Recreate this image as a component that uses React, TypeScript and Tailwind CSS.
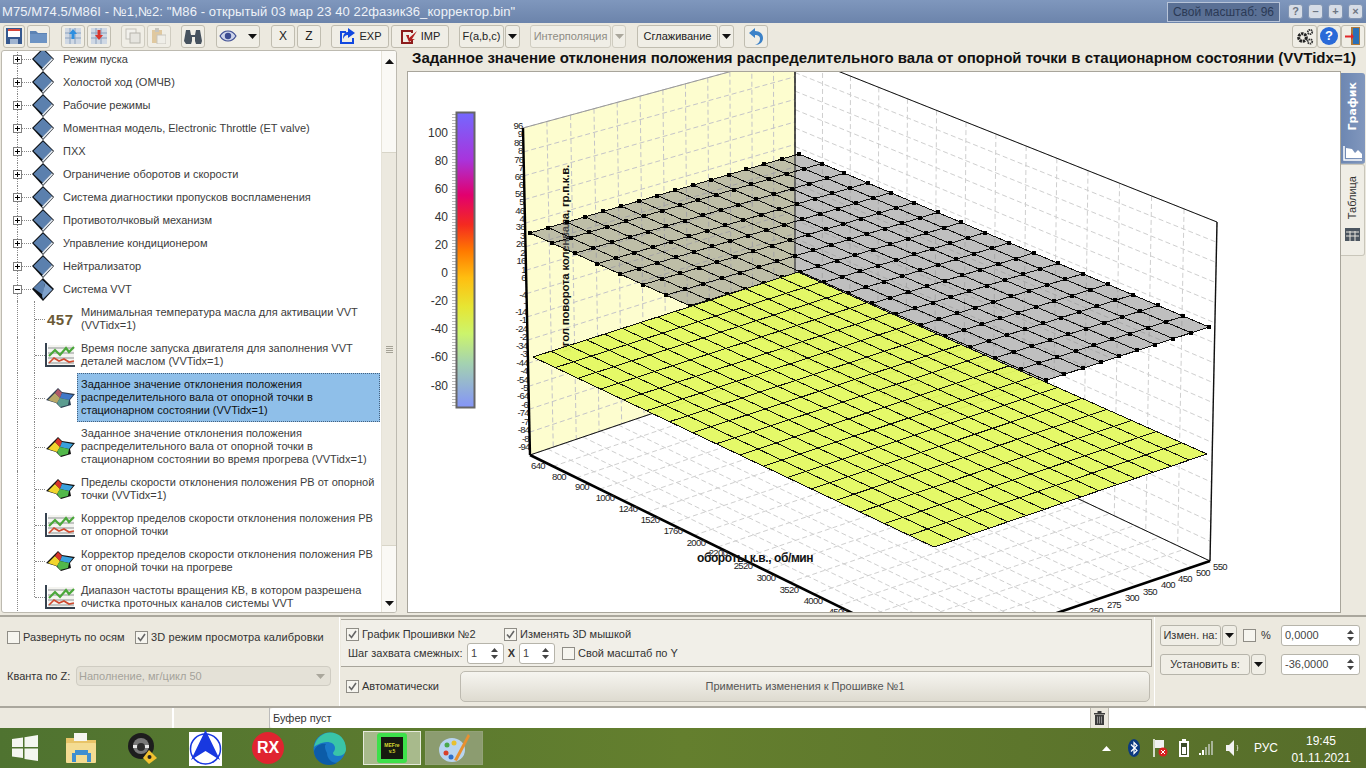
import React from "react";

type Pt = [number, number];

// maps the unit square on a screen quad, so the 3D planes keep their perspective
function quadMap(q: Pt[]) {
  const [[x0, y0], [x1, y1], [x2, y2], [x3, y3]] = q;
  const dx1 = x1 - x2, dx2 = x3 - x2, sx = x0 - x1 + x2 - x3;
  const dy1 = y1 - y2, dy2 = y3 - y2, sy = y0 - y1 + y2 - y3;
  const den = dx1 * dy2 - dx2 * dy1;
  const g = (sx * dy2 - dx2 * sy) / den;
  const h = (dx1 * sy - sx * dy1) / den;
  const a = x1 - x0 + g * x1, b = x3 - x0 + h * x3;
  const d = y1 - y0 + g * y1, e = y3 - y0 + h * y3;
  return (u: number, v: number): Pt => {
    const w = g * u + h * v + 1;
    return [(a * u + b * v + x0) / w, (d * u + e * v + y0) / w];
  };
}

function Grid({ quad, nu, nv, ...rest }: { quad: Pt[]; nu: number; nv: number } & React.SVGProps<SVGPathElement>) {
  const m = quadMap(quad);
  let path = "";
  for (let i = 0; i <= nu; i++) {
    const p = m(i / nu, 0), r = m(i / nu, 1);
    path += `M${p[0]} ${p[1]}L${r[0]} ${r[1]}`;
  }
  for (let i = 0; i <= nv; i++) {
    const p = m(0, i / nv), r = m(1, i / nv);
    path += `M${p[0]} ${p[1]}L${r[0]} ${r[1]}`;
  }
  return <path d={path} fill="none" {...rest} />;
}

const pts = (q: Pt[]) => q.map((p) => p.join(",")).join(" ");

const grayQ: Pt[] = [[530, 233], [799, 154], [1209, 327], [934, 417]];
const yellowQ: Pt[] = [[533, 357], [798, 272], [1207, 454], [934, 547]];
const leftWall: Pt[] = [[523, 128], [795, 54], [795, 365], [530, 455]];
const backWall: Pt[] = [[795, 54], [1217, 222], [1210, 561], [795, 365]];
const floor: Pt[] = [[530, 455], [795, 365], [1210, 561], [936, 654]];

const xLabels: [string, number, number][] = [
  ["640", 538, 469], ["800", 559, 480], ["900", 582, 490], ["1000", 605, 501], ["1240", 628, 512],
  ["1520", 650, 523], ["1760", 673, 534], ["2000", 696, 546], ["2200", 718, 556], ["2520", 743, 569],
  ["3000", 766, 581], ["3520", 789, 593], ["4000", 813, 604], ["4500", 838, 615],
];
const rLabels: [string, number, number][] = [
  ["550", 1220, 570], ["500", 1203, 576], ["450", 1185, 582], ["400", 1168, 588],
  ["350", 1150, 595], ["300", 1132, 601], ["275", 1114, 608], ["250", 1096, 614],
];
const scale: [string, number][] = [
  ["100", 137], ["80", 165], ["60", 193], ["40", 221], ["20", 249],
  ["0", 277], ["-20", 305], ["-40", 333], ["-60", 361], ["-80", 390],
];

function Chart() {
  const m = quadMap(grayQ);
  const dots: Pt[] = [];
  for (let i = 0; i <= 15; i++) for (let j = 0; j <= 17; j++) dots.push(m(i / 15, j / 17));
  const zLabels: string[] = [];
  for (let v = 96; v >= -96; v -= 5) zLabels.push(String(v));
  return (
    <svg viewBox="408 72 932 540" className="block h-[540px] w-[932px] bg-white" style={{ fontFamily: '"Liberation Sans", sans-serif' }}>
      <defs>
        <linearGradient id="bar" x1="0" y1="0" x2="0" y2="1">
          <stop offset="0" stopColor="#7468ff" />
          <stop offset="0.16" stopColor="#a834dc" />
          <stop offset="0.28" stopColor="#e2006e" />
          <stop offset="0.38" stopColor="#f42a20" />
          <stop offset="0.47" stopColor="#ff7a00" />
          <stop offset="0.56" stopColor="#ffbe10" />
          <stop offset="0.66" stopColor="#e6e634" />
          <stop offset="0.75" stopColor="#ccf46c" />
          <stop offset="0.85" stopColor="#a4d2b0" />
          <stop offset="1" stopColor="#8494f8" />
        </linearGradient>
      </defs>

      {zLabels.map((t, i) => (
        <text key={t} x={522.5 + (i * 7) / 38 + (i % 2 ? 4 : 0)} y={129 + i * 8.45} textAnchor="end" fontSize="9.5" letterSpacing="-0.8" fill="#222">{t}</text>
      ))}
      <polygon points={pts(leftWall)} fill="#fdfdcf" />
      <Grid quad={leftWall} nu={12} nv={14} stroke="#c4c4c8" strokeDasharray="5 3" />
      <Grid quad={backWall} nu={14} nv={17} stroke="#cfcfcf" strokeDasharray="5 3" />
      <Grid quad={floor} nu={15} nv={17} stroke="#cfcfcf" strokeDasharray="5 3" />

      <line x1="523" y1="128" x2="795" y2="54" stroke="#999" />
      <line x1="795" y1="54" x2="1217" y2="222" stroke="#111" />
      <line x1="795" y1="54" x2="795" y2="365" stroke="#111" strokeWidth="1.4" />
      <line x1="1217" y1="222" x2="1210" y2="561" stroke="#111" strokeWidth="1.4" />
      <line x1="530" y1="455" x2="795" y2="365" stroke="#111" />
      <line x1="795" y1="365" x2="1210" y2="561" stroke="#111" />
      <line x1="523" y1="128" x2="530" y2="455" stroke="#000" strokeWidth="2.4" />
      <line x1="530" y1="455" x2="936" y2="654" stroke="#000" strokeWidth="2.6" />
      <line x1="1210" y1="561" x2="936" y2="654" stroke="#000" strokeWidth="2.6" />

      {xLabels.map(([t, x, y]) => (
        <text key={t} x={x} y={y} textAnchor="middle" fontSize="9.5" letterSpacing="-0.6" fill="#222">{t}</text>
      ))}
      {rLabels.map(([t, x, y]) => (
        <text key={t} x={x} y={y} textAnchor="middle" fontSize="9.5" letterSpacing="-0.6" fill="#222">{t}</text>
      ))}

      <text transform="translate(569 165) rotate(-90)" textAnchor="end" fontSize="11.5" letterSpacing="-0.25" fontWeight="700" fill="#111">
        угол поворота коленвала, гр.п.к.в.
      </text>

      <polygon points={pts(grayQ)} fill="#808080" fillOpacity="0.5" />
      <Grid quad={grayQ} nu={15} nv={17} stroke="#111" shapeRendering="crispEdges" />
      {dots.map(([x, y], i) => (
        <rect key={i} x={Math.round(x) - 2} y={Math.round(y) - 2} width="4" height="4" fill="#000" />
      ))}

      <polygon points={pts(yellowQ)} fill="#e4f963" fillOpacity="0.96" />
      <Grid quad={yellowQ} nu={15} nv={17} stroke="#111" shapeRendering="crispEdges" />

      <text x="697" y="562" fontSize="12" letterSpacing="-0.4" fontWeight="700" fill="#111">обороты к.в., об/мин</text>

      {Array.from({ length: 98 }, (_, i) => (
        <rect key={i} x="452" y={114 + i * 3} width="4" height="1" fill="#bbb" />
      ))}
      <rect x="456.5" y="112.5" width="18" height="295" fill="url(#bar)" stroke="#666" strokeWidth="2" />
      {scale.map(([t, y]) => (
        <text key={t} x="448" y={y} textAnchor="end" fontSize="12" fill="#333">{t}</text>
      ))}
    </svg>
  );
}

function ToolBtn({ w, ml = 0, off, children }: { w: string; ml?: string | number; off?: boolean; children?: React.ReactNode }) {
  return (
    <div
      style={{ marginLeft: ml as number, width: w }}
      className={`flex h-[23px] shrink-0 items-center justify-center rounded-[3px] border bg-[#f0eee6] text-[11px] ${off ? "border-[#cfccc0] text-[#8e8c84]" : "border-[#c0bdb0] text-[#222]"}`}
    >
      {children}
    </div>
  );
}

function Tri({ off, up }: { off?: boolean; up?: boolean }) {
  return (
    <svg width="9" height="5" viewBox="0 0 9 5" className={up ? "rotate-180" : ""}>
      <path d="M0 0h9L4.5 5z" fill={off ? "#aaa79c" : "#111"} />
    </svg>
  );
}

function Check({ on }: { on?: boolean }) {
  return (
    <span className="flex h-[13px] w-[13px] shrink-0 items-center justify-center border border-[#8f8d86] bg-[#f6f5ef]">
      {on && (
        <svg width="9" height="9" viewBox="0 0 9 9">
          <path d="M1 4.5l2.5 3L8 1" fill="none" stroke="#666" strokeWidth="1.6" />
        </svg>
      )}
    </span>
  );
}

function Spin({ w, value }: { w: string; value: string }) {
  return (
    <div style={{ width: w }} className="flex h-[21px] shrink-0 items-center justify-between rounded-[3px] border border-[#b6b4aa] bg-white pl-[3px] pr-[5px] text-[11px] text-[#444]">
      <span>{value}</span>
      <span className="flex flex-col gap-[3px]">
        <svg width="7" height="4" viewBox="0 0 7 4"><path d="M0 4h7L3.5 0z" fill="#444" /></svg>
        <svg width="7" height="4" viewBox="0 0 7 4"><path d="M0 0h7L3.5 4z" fill="#444" /></svg>
      </span>
    </div>
  );
}

function Book({ open }: { open?: boolean }) {
  return (
    <svg width="24" height="26" viewBox="0 0 24 26" className="-my-[2px] shrink-0">
      <path d="M1 12L12 1l11 11-11 12z" fill="#0b0f14" />
      <path d={open ? "M2.5 11L11 3l3 3-2 12z" : "M2.5 12L12 2.5l9 8.5-9 10z"} fill="#5b80ae" />
      {open ? <path d="M11 3l10.5 9.5L12 22l-1-3 3-12z" fill="#7fa2cc" /> : <path d="M21 11l1 1.5L12 23l-1-1.5z" fill="#dfe7f0" />}
    </svg>
  );
}

function LineIcon() {
  return (
    <svg width="30" height="26" viewBox="0 0 30 26">
      <rect x="3" y="3" width="26" height="20" fill="#f4f4f0" />
      <path d="M1 1v23h29" fill="none" stroke="#36424f" strokeWidth="2" />
      <path d="M3 6h26M3 11h26M3 16h26M3 21h26" stroke="#8f9494" strokeWidth="1" />
      <path d="M4 14l6-6 5 5 6-7 3 4 5-5" fill="none" stroke="#4aa83a" strokeWidth="2.2" />
      <path d="M4 21l5-5 5 3 5-2 5 3 5-1" fill="none" stroke="#cf4a30" strokeWidth="1.7" />
    </svg>
  );
}

function SurfaceIcon({ dim }: { dim?: boolean }) {
  return (
    <svg width="30" height="24" viewBox="0 0 30 24">
      <path d="M1 14L13 2l4 4 13 2-5 6 1 5-10 3-5-5z" fill={dim ? "#2c3c50" : "#101010"} />
      <path d="M3 14l7-7 5 5-3 5z" fill={dim ? "#b8a868" : "#f2d52e"} />
      <path d="M10 7l3-4 4 4-2 5z" fill={dim ? "#b05868" : "#d8342a"} />
      <path d="M15 12l2-5 11 2-4 5z" fill={dim ? "#3f78c8" : "#3aa0dc"} />
      <path d="M12 17l3-5 9 2-1 5-8 2z" fill={dim ? "#5c9c90" : "#52b84a"} />
    </svg>
  );
}

const topRows = [
  "Режим пуска", "Холостой ход (ОМЧВ)", "Рабочие режимы", "Моментная модель, Electronic Throttle (ET valve)", "ПХХ",
  "Ограничение оборотов и скорости", "Система диагностики пропусков воспламенения", "Противотолчковый механизм",
  "Управление кондиционером", "Нейтрализатор", "Система VVT",
];

type Child = { h: string; icon: "num" | "line" | "surf" | "surfDim"; lines: string[]; sel?: boolean; last?: boolean };
const children: Child[] = [
  { h: "36px", icon: "num", lines: ["Минимальная температура масла для активации VVT", "(VVTidx=1)"] },
  { h: "36px", icon: "line", lines: ["Время после запуска двигателя для заполнения VVT", "деталей маслом (VVTidx=1)"] },
  { h: "49px", icon: "surfDim", sel: true, lines: ["Заданное значение отклонения положения", "распределительного вала от опорной точки в", "стационарном состоянии (VVTidx=1)"] },
  { h: "49px", icon: "surf", lines: ["Заданное значение отклонения положения", "распределительного вала от опорной точки в", "стационарном состоянии во время прогрева (VVTidx=1)"] },
  { h: "36px", icon: "surf", lines: ["Пределы скорости отклонения положения РВ от опорной", "точки (VVTidx=1)"] },
  { h: "36px", icon: "line", lines: ["Корректор пределов скорости отклонения положения РВ", "от опорной точки"] },
  { h: "36px", icon: "surf", lines: ["Корректор пределов скорости отклонения положения РВ", "от опорной точки на прогреве"] },
  { h: "36px", icon: "line", last: true, lines: ["Диапазон частоты вращения КВ, в котором разрешена", "очистка проточных каналов системы VVT"] },
];

function Tree() {
  return (
    <div className="-mt-[3px] w-[379px] shrink-0 text-[11px] leading-[13px] text-[#3c3c3c]">
      {topRows.map((t, i) => (
        <div key={t} className="relative flex h-[23px] items-center pl-[11px]">
          <span className="absolute bottom-0 left-[15px] top-0 border-l border-dotted border-[#888]" />
          <span className="relative flex h-[9px] w-[9px] shrink-0 items-center justify-center border border-[#808080] bg-white">
            <span className="h-px w-[5px] bg-black" />
            {i < 10 && <span className="absolute h-[5px] w-px bg-black" />}
          </span>
          <span className="h-0 w-[9px] border-t border-dotted border-[#888]" />
          <Book open={i === 10} />
          <span className="ml-2 whitespace-nowrap">{t}</span>
        </div>
      ))}
      {children.map((c) => (
        <div key={c.lines[0] + c.icon} style={{ height: c.h }} className="relative flex items-center pl-[43px]">
          <span className="absolute bottom-0 left-[15px] top-0 border-l border-dotted border-[#888]" />
          <span className={`absolute left-[32px] top-0 border-l border-dotted border-[#888] ${c.last ? "h-1/2" : "h-full"}`} />
          <span className="absolute left-[33px] top-1/2 w-[10px] border-t border-dotted border-[#888]" />
          <span className="flex w-[32px] shrink-0 items-center">
            {c.icon === "num" && <span className="pl-[2px] text-[15px] font-bold tracking-[0.5px] text-[#6b5a36]">457</span>}
            {c.icon === "line" && <LineIcon />}
            {c.icon === "surf" && <SurfaceIcon />}
            {c.icon === "surfDim" && <SurfaceIcon dim />}
          </span>
          <div className={`flex h-full w-[303px] flex-col justify-center whitespace-nowrap ${c.sel ? "border border-dotted border-[#44617f] bg-[#8fbfe9] pl-[3px] text-[#111]" : "pl-[4px]"}`}>
            {c.lines.map((l) => <div key={l}>{l}</div>)}
          </div>
        </div>
      ))}
    </div>
  );
}

function Scrollbar() {
  return (
    <div className="flex w-[16px] shrink-0 flex-col items-center border-l border-[#e6e3d8] bg-[#faf9f5]">
      <div className="flex h-[20px] items-center"><Tri up /></div>
      <div className="mt-[81px] flex h-[394px] w-full flex-col items-center justify-center gap-[1px] border-y border-[#d8d5c8] bg-[#ece9df]">
        <span className="h-px w-[7px] bg-[#a5a296]" />
        <span className="h-px w-[7px] bg-[#a5a296]" />
        <span className="h-px w-[7px] bg-[#a5a296]" />
        <span className="h-px w-[7px] bg-[#a5a296]" />
      </div>
      <div className="mt-auto flex h-[17px] items-center"><Tri /></div>
    </div>
  );
}

function TitleBar() {
  return (
    <div className="flex h-[23px] items-center justify-between bg-gradient-to-b from-[#7f97bd] to-[#6c84ab] pl-[2px] text-[13px] text-[#eef2f8]">
      <span className="whitespace-nowrap tracking-[0.1px]">M75/M74.5/M86I - №1,№2: "M86 - открытый 03 мар 23 40 22фазик36_корректор.bin"</span>
      <div className="flex items-center">
        <div className="flex h-[20px] w-[113px] items-center justify-center whitespace-nowrap border border-[#b8c4d8] bg-[#5a7095] text-[12px] text-[#2b3a55]">Свой масштаб: 96</div>
        {["?", "–", "+", "×"].map((t, i) => (
          <div key={t} style={{ marginLeft: i === 0 ? 8 : 5 }} className="flex h-[15px] w-[15px] items-center justify-center rounded-[3px] border border-[#8296b4] bg-[#d6dce6] text-[11px] font-bold text-[#6c7482]">{t}</div>
        ))}
        <span className="w-[3px]" />
      </div>
    </div>
  );
}

function Toolbar() {
  return (
    <div className="flex h-[26px] items-center bg-[#ece9df] pl-[3px]">
      <ToolBtn w="22px">
        <svg width="16" height="16" viewBox="0 0 16 16"><rect width="16" height="16" fill="#35588f" /><rect x="2" y="1" width="12" height="8" fill="#fff" /><rect x="2" y="1" width="12" height="2" fill="#d8463c" /><rect x="4" y="11" width="8" height="5" fill="#9fb4d0" /></svg>
      </ToolBtn>
      <ToolBtn w="23px" ml="2px">
        <svg width="17" height="14" viewBox="0 0 17 14"><path d="M0 2h6l2 2h9v10H0z" fill="#5c83b4" /><path d="M0 5h17v9H0z" fill="#6d94c4" /></svg>
      </ToolBtn>
      <ToolBtn w="24px" ml="11px">
        <svg width="16" height="16" viewBox="0 0 16 16"><rect width="16" height="16" fill="#cfd8e4" /><path d="M0 5h16M0 10h16M5 0v16M10 0v16" stroke="#8aa0bc" /><path d="M8 1l4 5H9.5v5h-3V6H4z" fill="#2f8fe0" /></svg>
      </ToolBtn>
      <ToolBtn w="24px" ml="2px">
        <svg width="16" height="16" viewBox="0 0 16 16"><rect width="16" height="16" fill="#cfd8e4" /><path d="M0 5h16M0 10h16M5 0v16M10 0v16" stroke="#8aa0bc" /><path d="M8 12L4 7h2.5V2h3v5H12z" fill="#d9352c" /></svg>
      </ToolBtn>
      <ToolBtn w="24px" ml="10px" off>
        <svg width="16" height="16" viewBox="0 0 16 16"><rect x="1" y="1" width="10" height="10" fill="#f2f1ec" stroke="#c2c0b8" /><rect x="5" y="5" width="10" height="10" fill="#e6e5df" stroke="#b6b4ac" /></svg>
      </ToolBtn>
      <ToolBtn w="24px" ml="2px" off>
        <svg width="14" height="16" viewBox="0 0 14 16"><rect y="2" width="10" height="13" fill="#e0c9a0" /><rect x="3" width="4" height="4" fill="#c8c6be" /><rect x="5" y="7" width="9" height="9" fill="#efeee8" stroke="#c8c6be" /></svg>
      </ToolBtn>
      <ToolBtn w="24px" ml="10px">
        <svg width="18" height="15" viewBox="0 0 18 15"><path d="M2 1h4l1 5h4l1-5h4l2 11-1 3h-5l-1-3V8H8v4l-1 3H2l-2-3z" fill="#46525e" /></svg>
      </ToolBtn>
      <ToolBtn w="44px" ml="11px">
        <svg width="18" height="12" viewBox="0 0 18 12"><path d="M1 6s3-5 8-5 8 5 8 5-3 5-8 5-8-5-8-5z" fill="#cdd4ea" stroke="#3c4c92" strokeWidth="1.2" /><circle cx="9" cy="6" r="3.2" fill="#3c4c92" /></svg>
        <span className="ml-[11px]"><Tri /></span>
      </ToolBtn>
      <ToolBtn w="24px" ml="11px"><span className="text-[12px]">X</span></ToolBtn>
      <ToolBtn w="24px" ml="2px"><span className="text-[12px]">Z</span></ToolBtn>
      <ToolBtn w="58px" ml="10px">
        <svg width="18" height="16" viewBox="0 0 18 16" className="mr-[3px]"><path d="M2 3h6v2H4v9h10v-4h2v6H2z" fill="#1148e0" /><path d="M10 0l7 5-7 5V7C7 7 6 9 5 11c0-5 2-7 5-7z" fill="#1148e0" /></svg>
        EXP
      </ToolBtn>
      <ToolBtn w="58px" ml="2px">
        <svg width="18" height="16" viewBox="0 0 18 16" className="mr-[3px]"><path d="M1 2h12v3h-2V4H3v10h8v-2h2v4H1z" fill="#8c1c1c" /><path d="M17 3l-8 7V7H6l3 7 6-3h-3z" fill="#b02020" /></svg>
        IMP
      </ToolBtn>
      <ToolBtn w="45px" ml="10px">F(a,b,c)</ToolBtn>
      <ToolBtn w="15px" ml="1px"><Tri /></ToolBtn>
      <ToolBtn w="81px" ml="10px" off>Интерполяция</ToolBtn>
      <ToolBtn w="14px" ml="1px" off><Tri off /></ToolBtn>
      <ToolBtn w="81px" ml="11px">Сглаживание</ToolBtn>
      <ToolBtn w="15px" ml="1px"><Tri /></ToolBtn>
      <ToolBtn w="24px" ml="10px">
        <svg width="16" height="17" viewBox="0 0 16 17"><path d="M1 5l6-5v3c5 0 8 3 8 7s-3 7-8 7c3-1 5-3 5-6s-2-4-5-4v3z" fill="#3c82c8" /></svg>
      </ToolBtn>
      <div className="ml-auto flex pr-[1px]">
        <ToolBtn w="25px">
          <svg width="18" height="17" viewBox="0 0 18 17"><circle cx="6.5" cy="9.500" r="3.800" fill="none" stroke="#222" strokeWidth="3" strokeDasharray="2.400 0.800" /><circle cx="14" cy="4" r="2.200" fill="none" stroke="#333" strokeWidth="1.800" strokeDasharray="1.400 0.600" /><circle cx="14" cy="13.500" r="2.200" fill="none" stroke="#333" strokeWidth="1.800" strokeDasharray="1.400 0.600" /></svg>
        </ToolBtn>
        <ToolBtn w="24px">
          <span className="flex h-[18px] w-[18px] items-center justify-center rounded-full bg-[#2a6ad8] text-[13px] font-bold text-white">?</span>
        </ToolBtn>
        <ToolBtn w="24px">
          <svg width="16" height="18" viewBox="0 0 16 18"><rect x="6" width="9" height="18" fill="#b07a3c" /><rect x="8" y="1" width="6" height="16" fill="#2a70b8" /><path d="M0 8.500h6V6l3 3.500L6 13v-2.500H0z" fill="#e0282a" /></svg>
        </ToolBtn>
      </div>
    </div>
  );
}

function SideTabs() {
  return (
    <div className="flex w-[24px] shrink-0 flex-col pt-[2px]">
      <div className="flex h-[91px] flex-col items-center rounded-r-[3px] border-b border-[#8ea0bb] bg-gradient-to-r from-[#6d87b2] to-[#8197bd] pt-[9px] text-white">
        <span className="text-[11px] font-bold [writing-mode:vertical-rl] rotate-180" style={{ fontFamily: '"DejaVu Sans", sans-serif' }}>График</span>
        <svg width="20" height="16" viewBox="0 0 20 16" className="mt-auto mb-[2px]"><path d="M1 1v14h18" fill="none" stroke="#fff" strokeWidth="1.5" /><path d="M3 13V3l6 1 3 4 3-3 4 4v4z" fill="#fff" /></svg>
      </div>
      <div className="flex h-[92px] flex-col items-center rounded-r-[3px] border border-l-0 border-[#c9c6ba] bg-[#f0eee6] pt-[11px] text-[#333]">
        <span className="text-[11px] [writing-mode:vertical-rl] rotate-180">Таблица</span>
        <svg width="15" height="13" viewBox="0 0 15 13" className="mt-auto mb-[14px]"><rect width="15" height="13" fill="#4c5660" /><path d="M1 4h13M1 8h13M5 3v10M10 3v10" stroke="#e8e6de" /></svg>
      </div>
    </div>
  );
}

function BottomPanels() {
  return (
    <div className="flex h-[93px] border-y-2 border-[#aaa79d] bg-[#ece9df] text-[11px] text-[#333]">
      <div className="w-[340px] shrink-0 border-r border-white pl-[7px] pt-[12px]">
        <div className="flex h-[16px] items-center">
          <Check /><span className="ml-[3px] w-[112px]">Развернуть по осям</span>
          <Check on /><span className="ml-[3px] tracking-[0.1px]">3D режим просмотра калибровки</span>
        </div>
        <div className="mt-[21px] flex h-[20px] items-center">
          <span className="w-[69px]">Кванта по Z:</span>
          <div className="flex h-[20px] w-[255px] items-center justify-between rounded-[4px] border border-[#cfccc2] bg-[#e4e1d7] pl-[2px] pr-[5px] text-[#a5a39b]">
            <span>Наполнение, мг/цикл 50</span>
            <Tri off />
          </div>
        </div>
      </div>
      <div className="w-[815px] shrink-0 border-r border-white pl-px pt-[2px]">
        <div className="h-[48px] w-[811px] border-y border-r border-[#a8a59b] bg-[#f1efe8] pl-[5px] pt-[6px]">
          <div className="flex h-[16px] items-center">
            <Check on /><span className="ml-[3px] w-[142px]">График Прошивки №2</span>
            <Check on /><span className="ml-[3px]">Изменять 3D мышкой</span>
          </div>
          <div className="mt-[1px] flex h-[21px] items-center">
            <span className="ml-[2px] w-[119px] whitespace-nowrap">Шаг захвата смежных:</span>
            <Spin w="37px" value="1" />
            <b className="w-[15px] text-center text-[11px]">X</b>
            <Spin w="36px" value="1" />
            <span className="ml-[7px]" />
            <Check /><span className="ml-[3px]">Свой масштаб по Y</span>
          </div>
        </div>
        <div className="mt-[4px] flex h-[31px] items-center pl-[5px]">
          <Check on /><span className="ml-[3px] w-[98px]">Автоматически</span>
          <div className="flex h-[31px] w-[690px] items-center justify-center rounded-[5px] border border-[#bdbab0] bg-gradient-to-b from-[#f6f5f0] to-[#dedbd0] text-[#555]">Применить изменения к Прошивке №1</div>
        </div>
      </div>
      <div className="flex-1 pl-[5px] pt-[8px]">
        <div className="flex h-[21px] items-center">
          <div className="flex h-[21px] w-[61px] items-center justify-center rounded-[3px] border border-[#b6b4aa] bg-[#f0eee6]">Измен. на:</div>
          <div className="ml-px flex h-[21px] w-[15px] items-center justify-center rounded-[3px] border border-[#b6b4aa] bg-[#f0eee6]"><Tri /></div>
          <span className="ml-[6px]"><Check /></span>
          <span className="ml-[2px] w-[23px] pl-[3px]">%</span>
          <Spin w="79px" value="0,0000" />
        </div>
        <div className="mt-[8px] flex h-[21px] items-center">
          <div className="flex h-[21px] w-[90px] items-center justify-center rounded-[3px] border border-[#b6b4aa] bg-[#f0eee6]">Установить в:</div>
          <div className="ml-px flex h-[21px] w-[15px] items-center justify-center rounded-[3px] border border-[#b6b4aa] bg-[#f0eee6]"><Tri /></div>
          <span className="w-[15px]" />
          <Spin w="79px" value="-36,0000" />
        </div>
      </div>
    </div>
  );
}

function StatusBar() {
  return (
    <div className="flex h-[20px] bg-[#ece9df] text-[11px] text-[#333]">
      <div className="w-[174px] border-r-2 border-white" />
      <div className="w-[96px] border-r border-[#bbb]" />
      <div className="flex w-[820px] items-center rounded-l-[3px] bg-white pl-[3px]">Буфер пуст</div>
      <div className="flex w-[19px] items-center justify-center border-x border-[#bdbab0]">
        <svg width="11" height="14" viewBox="0 0 11 14"><path d="M0 2h11v1.500H0zM3.500 0h4v2h-4zM1 4h9v10H1z" fill="#3c3c3c" /><path d="M3.500 5.500v7M5.500 5.500v7M7.500 5.500v7" stroke="#aaa" strokeWidth="0.8" /></svg>
      </div>
      <div className="flex-1 rounded-r-[3px] bg-white" />
    </div>
  );
}

function Taskbar() {
  return (
    <div className="flex h-[40px] items-center bg-gradient-to-r from-[#4f7330] via-[#647f2e] to-[#566d2a] text-white">
      <svg width="26" height="26" viewBox="0 0 26 26" className="ml-[12px]"><path d="M0 4l11-1.500V12H0zM12.500 2.300L26 0v12H12.500zM0 13.500h11V23L0 21.500zM12.500 13.500H26V26l-13.500-2z" fill="#f4f6f0" /></svg>
      <svg width="32" height="32" viewBox="0 0 32 32" className="ml-[27px]"><path d="M1 6h10l2 2h18v10H1z" fill="#e8c468" /><rect x="1" y="11" width="30" height="20" rx="1" fill="#f4dc92" /><rect x="9" y="1" width="13" height="8" fill="#f6f6f0" /><path d="M10 18h13v3h3v9h-4v-7h-11v7H7v-9h3z" fill="#3f8fd0" /></svg>
      <svg width="31" height="32" viewBox="0 0 31 32" className="ml-[30px]"><circle cx="14" cy="14" r="13" fill="#1d1d1d" /><circle cx="14" cy="14" r="8" fill="#7a7a7a" /><path d="M6 13h16v3H6z" fill="#e8e8e8" /><circle cx="14" cy="15" r="4" fill="#2c2c2c" /><path d="M22 18l8 8-8 6-6-6z" fill="#f2c230" /><circle cx="22.500" cy="25" r="2" fill="#222" /></svg>
      <svg width="33" height="36" viewBox="0 0 33 36" className="ml-[31px]"><rect y="2" width="33" height="34" fill="#fff" /><circle cx="16.500" cy="19" r="15" fill="none" stroke="#1838e0" strokeWidth="1.5" /><path d="M16.500 0L31 30l-14.500-9L2 30z" fill="#1838e0" /></svg>
      <span className="ml-[30px] flex h-[32px] w-[32px] items-center justify-center rounded-full bg-[#e02430] text-[16px] font-bold">RX</span>
      <svg width="33" height="33" viewBox="0 0 33 33" className="ml-[29px]"><circle cx="16.500" cy="16.500" r="16" fill="#1a78c8" /><path d="M1 15C3 5 11 .5 17 .5 26 .5 33 7 33 17c0 4-3 7-8 7-3 0-5-1-5-3 0-1 2-2 2-5 0-4-4-6-8-6-6 0-12 4-13 5z" fill="#39c4a8" /><path d="M14 21c0 6 5 10 10 10-2 1-5 2-8 2C7 33 1 26 1 19c2-6 8-8 12-7-2 2-1 5 1 9z" fill="#0c5ca8" /></svg>
      <div className="ml-[17px] flex h-[34px] w-[58px] items-center justify-center border border-[#e6eadc] bg-[#a8ba8c]">
        <div className="flex h-[30px] w-[30px] items-center justify-center rounded-[3px] bg-[#3de04a]">
          <span className="flex h-[22px] w-[22px] flex-col items-center justify-center bg-[#171a10] text-[5px] font-bold leading-[6px] text-[#d8d830]"><span>MEFre</span><span>v.5</span></span>
        </div>
      </div>
      <div className="ml-[4px] flex h-[34px] w-[58px] items-center justify-center border border-[#93a278] bg-[#8c9c70]">
        <svg width="32" height="30" viewBox="0 0 32 30"><ellipse cx="14" cy="17" rx="13" ry="12" fill="#b8d4f0" /><circle cx="8" cy="20" r="2.500" fill="#d8402a" /><circle cx="9" cy="12" r="2.500" fill="#4aa84a" /><circle cx="16" cy="10" r="2.500" fill="#e8c030" /><circle cx="13" cy="24" r="2.500" fill="#3070c8" /><path d="M30 1l2 2-13 25-3-1z" fill="#e89030" /></svg>
      </div>
      <div className="ml-auto flex items-center">
        <svg width="9" height="5" viewBox="0 0 9 5" className="mr-[17px]"><path d="M0 5h9L4.500 0z" fill="#fff" /></svg>
        <svg width="12" height="18" viewBox="0 0 12 18"><ellipse cx="6" cy="9" rx="6" ry="9" fill="#0c3a80" /><path d="M3 5.500l6 6-3 3v-11l3 3-6 6" fill="none" stroke="#fff" strokeWidth="1.200" /></svg>
        <svg width="16" height="18" viewBox="0 0 16 18" className="ml-[12px]"><path d="M2 0v18" stroke="#fff" strokeWidth="1.500" /><path d="M3 1h9v8H3z" fill="#f2f2f2" /><circle cx="11" cy="13" r="4.500" fill="#d82020" /><path d="M9 11l4 4M13 11l-4 4" stroke="#fff" /></svg>
        <svg width="10" height="18" viewBox="0 0 10 18" className="ml-[11px]"><path d="M3 0h4v2h3v16H0V2h3z" fill="#fff" /><rect x="2" y="4" width="6" height="12" fill="#3c4c2a" /><rect x="3" y="8" width="4" height="7" fill="#fff" /></svg>
        <svg width="14" height="14" viewBox="0 0 14 14" className="ml-[10px]"><path d="M0 12h2v2H0zM3 9h2v5H3z" fill="#fff" /><path d="M6 6h2v8H6zM9 3h2v11H9zM12 0h2v14h-2z" fill="#a8b498" /></svg>
        <svg width="14" height="16" viewBox="0 0 14 16" className="ml-[13px]"><path d="M0 5h3l5-5v16l-5-5H0z" fill="#f2f2f2" /><path d="M11 5c1 2 1 4 0 6" fill="none" stroke="#dfe4d4" /></svg>
        <span className="ml-[14px] text-[12px]">РУС</span>
        <div className="ml-[15px] mr-[17px] flex w-[56px] flex-col items-center pt-[3px] text-[12px] leading-[17px]">
          <span>19:45</span>
          <span>01.11.2021</span>
        </div>
      </div>
    </div>
  );
}

export default function App() {
  return (
    <div className="h-[768px] w-[1366px] overflow-hidden bg-[#ece9df]" style={{ fontFamily: '"Liberation Sans", Arial, sans-serif' }}>
      <TitleBar />
      <Toolbar />
      <div className="flex h-[566px]">
        <div className="ml-px mt-px flex h-[563px] w-[396px] shrink-0 overflow-hidden rounded-[3px] border border-[#bdbab0] bg-white">
          <Tree />
          <Scrollbar />
        </div>
        <div className="ml-[10px] flex-1">
          <div className="flex h-[22px] items-center whitespace-nowrap pb-[4px] pl-[5px] text-[15px] font-bold text-[#111]">
            Заданное значение отклонения положения распределительного вала от опорной точки в стационарном состоянии (VVTidx=1)
          </div>
          <div className="flex">
            <div className="h-[542px] w-[934px] shrink-0 overflow-hidden border border-[#a8a59b]">
              <Chart />
            </div>
            <SideTabs />
          </div>
        </div>
      </div>
      <BottomPanels />
      <StatusBar />
      <Taskbar />
    </div>
  );
}
